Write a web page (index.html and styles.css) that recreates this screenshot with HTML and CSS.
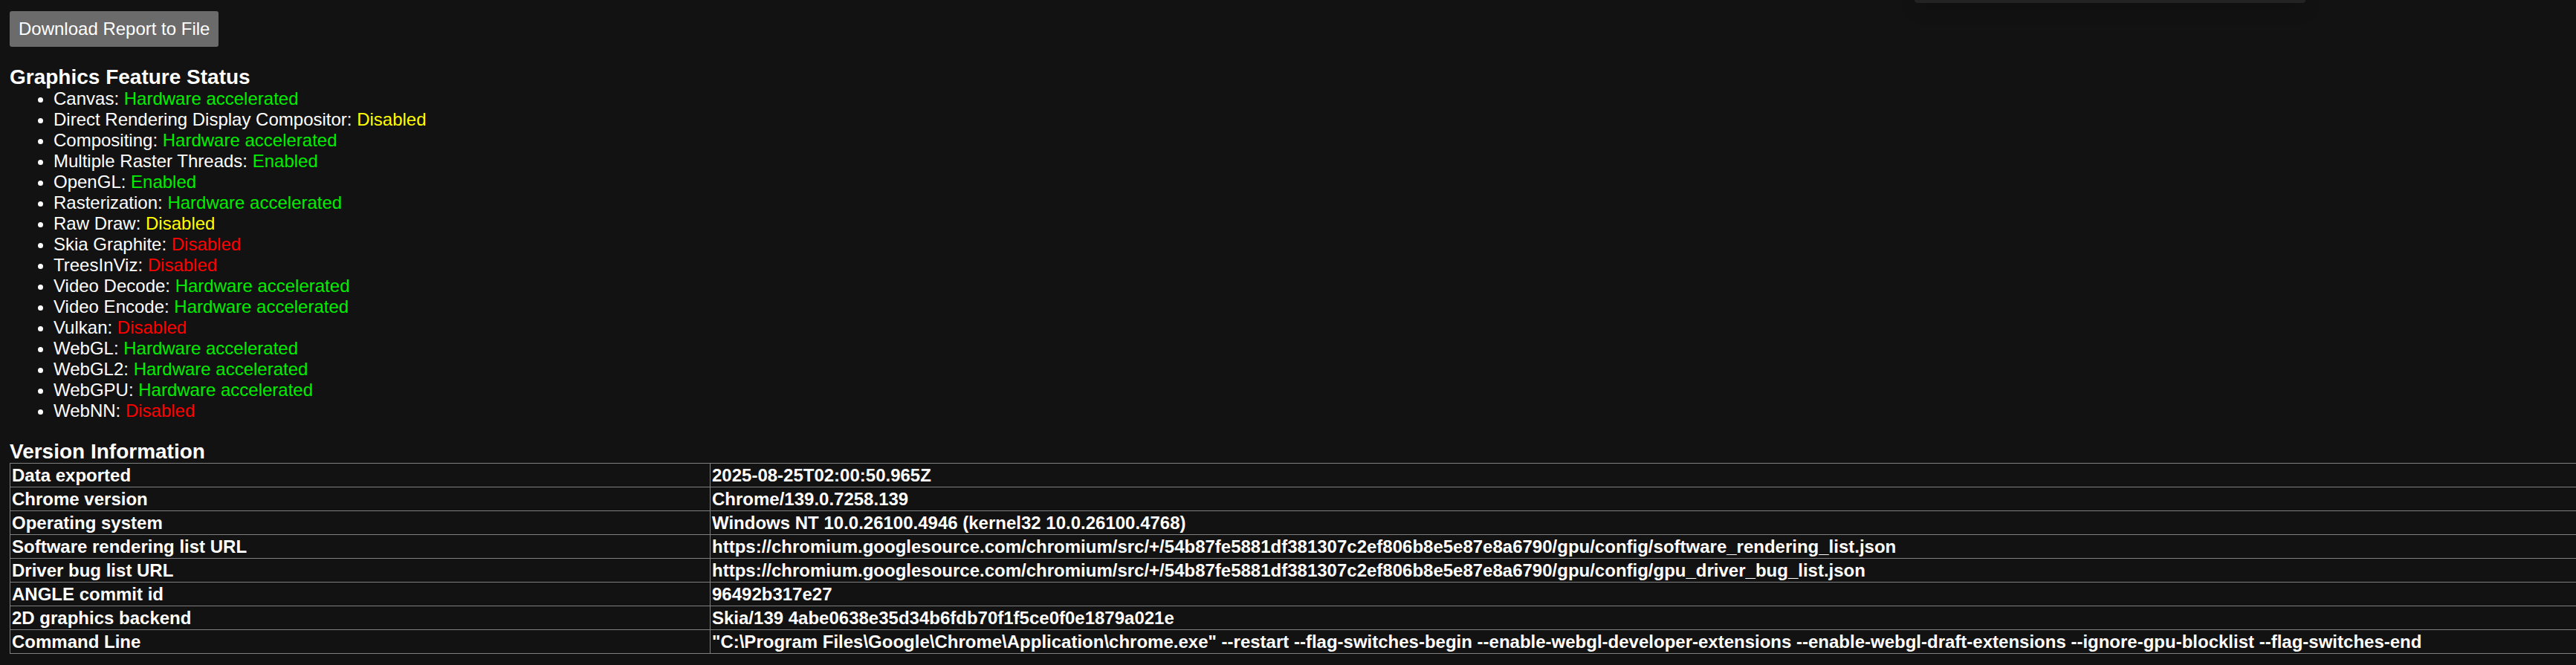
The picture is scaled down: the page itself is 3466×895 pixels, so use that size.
FILE: index.html
```html
<!DOCTYPE html>
<html lang="en">
<head>
<meta charset="utf-8">
<title>GPU Internals</title>
<link rel="stylesheet" href="styles.css">
</head>
<body>
<div class="popup-edge"></div>
<button class="download-btn">Download Report to File</button>

<h3 class="section-title">Graphics Feature Status</h3>
<ul class="feature-list">
  <li>Canvas: <span class="ok">Hardware accelerated</span></li>
  <li>Direct Rendering Display Compositor: <span class="warn">Disabled</span></li>
  <li>Compositing: <span class="ok">Hardware accelerated</span></li>
  <li>Multiple Raster Threads: <span class="ok">Enabled</span></li>
  <li>OpenGL: <span class="ok">Enabled</span></li>
  <li>Rasterization: <span class="ok">Hardware accelerated</span></li>
  <li>Raw Draw: <span class="warn">Disabled</span></li>
  <li>Skia Graphite: <span class="off">Disabled</span></li>
  <li>TreesInViz: <span class="off">Disabled</span></li>
  <li>Video Decode: <span class="ok">Hardware accelerated</span></li>
  <li>Video Encode: <span class="ok">Hardware accelerated</span></li>
  <li>Vulkan: <span class="off">Disabled</span></li>
  <li>WebGL: <span class="ok">Hardware accelerated</span></li>
  <li>WebGL2: <span class="ok">Hardware accelerated</span></li>
  <li>WebGPU: <span class="ok">Hardware accelerated</span></li>
  <li>WebNN: <span class="off">Disabled</span></li>
</ul>

<h3 class="section-title">Version Information</h3>
<table class="info-table">
  <colgroup><col class="col-label"><col class="col-value"></colgroup>
  <tbody>
    <tr><td>Data exported</td><td>2025-08-25T02:00:50.965Z</td></tr>
    <tr><td>Chrome version</td><td>Chrome/139.0.7258.139</td></tr>
    <tr><td>Operating system</td><td>Windows NT 10.0.26100.4946 (kernel32 10.0.26100.4768)</td></tr>
    <tr><td>Software rendering list URL</td><td>https://chromium.googlesource.com/chromium/src/+/54b87fe5881df381307c2ef806b8e5e87e8a6790/gpu/config/software_rendering_list.json</td></tr>
    <tr><td>Driver bug list URL</td><td>https://chromium.googlesource.com/chromium/src/+/54b87fe5881df381307c2ef806b8e5e87e8a6790/gpu/config/gpu_driver_bug_list.json</td></tr>
    <tr><td>ANGLE commit id</td><td>96492b317e27</td></tr>
    <tr><td>2D graphics backend</td><td>Skia/139 4abe0638e35d34b6fdb70f1f5ce0f0e1879a021e</td></tr>
    <tr><td>Command Line</td><td>"C:\Program Files\Google\Chrome\Application\chrome.exe" --restart --flag-switches-begin --enable-webgl-developer-extensions --enable-webgl-draft-extensions --ignore-gpu-blocklist --flag-switches-end</td></tr>
  </tbody>
</table>
</body>
</html>
```

FILE: styles.css
```css
html {
  background: #121212;
}

body {
  margin: 0;
  padding: 15px 0 0 13px;
  background: #121212;
  color: #ffffff;
  font-family: "Liberation Sans", Arial, sans-serif;
  font-size: 24px;
  position: relative;
  min-height: 880px;
}

.popup-edge {
  position: absolute;
  top: 0;
  left: 2576px;
  width: 526px;
  height: 4px;
  background: #232323;
  border-radius: 0 0 4px 4px;
  box-shadow: 0 6px 22px rgba(0, 0, 0, 0.45);
}

.download-btn {
  display: block;
  margin: 0;
  padding: 10px 12px;
  border: none;
  border-radius: 3px;
  background: #6b6b6b;
  color: #ffffff;
  font-family: "Liberation Sans", Arial, sans-serif;
  font-size: 24px;
  line-height: 28px;
}

.section-title {
  margin: 25px 0 0;
  font-size: 28px;
  font-weight: bold;
  line-height: 31px;
}

.feature-list {
  margin: 0;
  padding-left: 59px;
  list-style: disc;
}

.feature-list li {
  line-height: 28px;
}

.ok { color: #00ee00; }
.warn { color: #ffff00; }
.off { color: #ff0000; }

.info-table {
  width: 100%;
  border-collapse: collapse;
  table-layout: fixed;
  font-weight: bold;
}

.col-label { width: 942px; }

.info-table td {
  border: 1px solid #7f7f7f;
  padding: 2px 2px;
  line-height: 27px;
  white-space: nowrap;
  vertical-align: middle;
}

.info-table td:last-child {
  border-right: none;
}
```
